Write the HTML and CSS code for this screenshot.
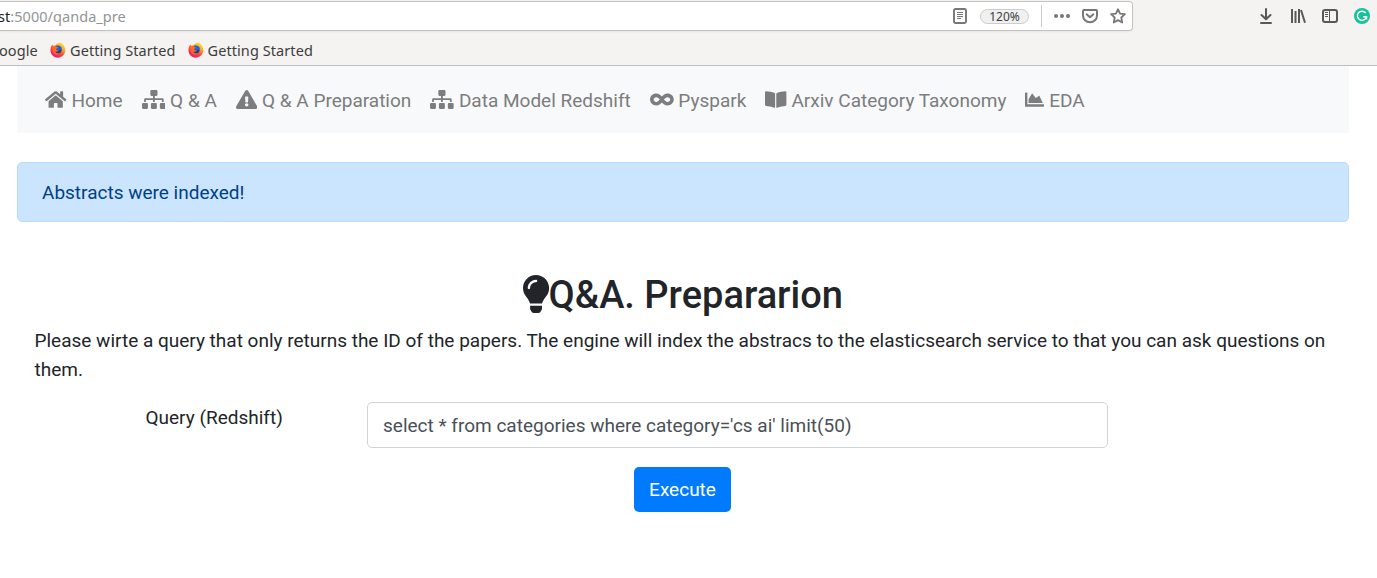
FILE: index.html
```html
<!DOCTYPE html>
<html lang="en">
<head>
<meta charset="utf-8">
<title>Q&amp;A Preparation</title>
<link rel="stylesheet" href="styles.css">
</head>
<body>
<svg width="0" height="0" class="defs">
  <symbol id="sitemap" viewBox="0 0 640 512"><path d="M128 352H32c-17.67 0-32 14.33-32 32v96c0 17.67 14.33 32 32 32h96c17.67 0 32-14.33 32-32v-96c0-17.67-14.33-32-32-32zm-24-80h192v48h48v-48h192v48h48v-57.59c0-21.17-17.23-38.41-38.41-38.41H344v-64h40c17.67 0 32-14.33 32-32V32c0-17.67-14.33-32-32-32H256c-17.67 0-32 14.33-32 32v96c0 17.67 14.33 32 32 32h40v64H94.41C73.23 224 56 241.23 56 262.41V320h48v-48zm264 80h-96c-17.67 0-32 14.33-32 32v96c0 17.67 14.33 32 32 32h96c17.67 0 32-14.33 32-32v-96c0-17.67-14.33-32-32-32zm240 0h-96c-17.67 0-32 14.33-32 32v96c0 17.67 14.33 32 32 32h96c17.67 0 32-14.33 32-32v-96c0-17.67-14.33-32-32-32z"/></symbol>
  <linearGradient id="flame" x1="0.85" y1="0" x2="0.2" y2="1"><stop offset="0" stop-color="#fff04a"/><stop offset=".35" stop-color="#ffa01e"/><stop offset=".65" stop-color="#ff3b3a"/><stop offset="1" stop-color="#f0107c"/></linearGradient>
  <symbol id="firefox" viewBox="0 0 16 16"><path fill="url(#flame)" d="M2.2 2.6 3.6 4 5.2 3.4C6.5 1.6 8 1.5 9.4.4c2 .3 3.4 1.5 4.5 3.1C16 7 15.700 10.500 13.500 13 10 16.700 5 16.300 2.300 13.200-.4 10 .2 5.500 2.200 2.600z"/><circle cx="7.800" cy="7.600" r="4.100" fill="#2463c9"/><path fill="#273a91" d="M4 8c1 1 3 1.200 4.500.2L11 7.500c.5 3-1.500 4.500-3.500 4.300C5.300 11.600 4 10 4 8z"/><path fill="#ff6a27" d="M2.500 4.500c1.500-1 3-.8 4 .3l1.500.6c-.3 1-1.700 1-2 1.800.2 1 1.600 1.300 3 .8-.8 1.800-2.700 2-4 1.500 1 2 3.500 2.400 5.500 1.300-1.500 2.500-5.500 2.500-7.200-.3-1-1.700-1.300-4-.8-6z"/></symbol>
</svg>
<header class="browser">
  <div class="toolbar">
    <div class="urlbar">
      <div class="url"><span class="host">st</span>:5000/qanda_pre</div>
      <div class="url-actions">
        <svg class="reader" width="14" height="16" viewBox="0 0 14 16" fill="none" stroke="#777"><rect x="1" y="1" width="12" height="14" rx="1.500" stroke-width="1.900"/><path d="M4 4.500h6M4 6.500h6M4 8.500h6M4 10.500h4"/></svg>
        <span class="zoom">120%</span>
        <span class="divider"></span>
        <svg class="dots" width="16" height="16" viewBox="0 0 16 16" fill="#777"><circle cx="2" cy="8" r="2"/><circle cx="8" cy="8" r="2"/><circle cx="14" cy="8" r="2"/></svg>
        <svg class="pocket" width="16" height="16" viewBox="0 0 16 16" fill="none" stroke="#777" stroke-width="2" stroke-linecap="round" stroke-linejoin="round"><path d="M2 2h12a1 1 0 0 1 1 1v4.500a7 6.800 0 0 1-14 0V3a1 1 0 0 1 1-1z"/><path d="m4.700 6.300 3.300 3 3.300-3"/></svg>
        <svg class="star" width="16" height="16" viewBox="0 0 16 16" fill="none" stroke="#777" stroke-width="1.800" stroke-linejoin="round"><path d="m8 1.200 2 4.400 4.900.6-3.600 3.300.9 5L8 12.100l-4.200 2.400.9-5L1.100 6.200 6 5.600z"/></svg>
      </div>
    </div>
    <div class="tools">
      <svg width="16" height="16" viewBox="0 0 16 16" fill="none" stroke="#58585a" stroke-width="2" stroke-linecap="round" stroke-linejoin="round"><path d="M8 1v10M3.500 7 8 11.300 12.500 7M3 15h10"/></svg>
      <svg width="16" height="16" viewBox="0 0 16 16" fill="none" stroke="#58585a" stroke-width="2"><path d="M2 1v14M5.500 3v12M9 1v14M11 2l4 12.700"/></svg>
      <svg width="16" height="16" viewBox="0 0 16 16" fill="none" stroke="#58585a"><rect x="1" y="2" width="14" height="12" rx="2" stroke-width="2"/><path d="M7.500 2v12M3 4.500h3M3 6.500h3M3 8.500h3"/></svg>
      <svg width="16" height="16" viewBox="0 0 16 16" fill="none"><circle cx="8" cy="8" r="8" fill="#15c39a"/><path d="M11.700 5A4.600 4.600 0 1 0 12.500 8.800H9.200M12.500 8.600v3" stroke="#fff" stroke-width="1.500"/></svg>
    </div>
  </div>
  <div class="bookmarks">
    <span class="cut">oogle</span>
    <span class="bookmark"><svg width="16" height="16"><use href="#firefox"/></svg>Getting Started</span>
    <span class="bookmark"><svg width="16" height="16"><use href="#firefox"/></svg>Getting Started</span>
  </div>
</header>
<main class="container">
  <nav class="navbar">
    <a class="nav-link"><svg class="icon wide" viewBox="0 0 576 512"><path d="M280.370 148.260L96 300.110V464a16 16 0 0 0 16 16l112.060-.29a16 16 0 0 0 15.920-16V368a16 16 0 0 1 16-16h64a16 16 0 0 1 16 16v95.640a16 16 0 0 0 16 16.050L464 480a16 16 0 0 0 16-16V300L295.670 148.260a12.190 12.190 0 0 0-15.300 0zM571.600 251.470L488 182.560V44.050a12 12 0 0 0-12-12h-56a12 12 0 0 0-12 12v72.610L318.470 43a48 48 0 0 0-61 0L4.340 251.470a12 12 0 0 0-1.600 16.900l25.500 31A12 12 0 0 0 45.150 301l235.220-193.740a12.190 12.190 0 0 1 15.300 0L530.900 301a12 12 0 0 0 16.900-1.600l25.500-31a12 12 0 0 0-1.700-16.930z"/></svg> Home</a>
    <a class="nav-link"><svg class="icon wider"><use href="#sitemap"/></svg> Q &amp; A</a>
    <a class="nav-link"><svg class="icon wide" viewBox="0 0 576 512"><path d="M569.517 440.013C587.975 472.007 564.806 512 527.940 512H48.054c-36.937 0-59.999-40.055-41.577-71.987L246.423 23.985c18.467-32.009 64.720-31.951 83.154 0l239.940 416.028zM288 354c-25.405 0-46 20.595-46 46s20.595 46 46 46 46-20.595 46-46-20.595-46-46-46zm-43.673-165.346l7.418 136c.347 6.364 5.609 11.346 11.982 11.346h48.546c6.373 0 11.635-4.982 11.982-11.346l7.418-136c.375-6.874-5.098-12.654-11.982-12.654h-63.383c-6.884 0-12.356 5.780-11.981 12.654z"/></svg> Q &amp; A Preparation</a>
    <a class="nav-link"><svg class="icon wider"><use href="#sitemap"/></svg> Data Model Redshift</a>
    <a class="nav-link"><svg class="icon wider" viewBox="0 0 640 512"><path d="M471.100 96C405 96 353.300 137.300 320 174.600 286.700 137.300 235 96 168.900 96 75.800 96 0 167.800 0 256s75.800 160 168.900 160c66.100 0 117.800-41.300 151.100-78.600 33.300 37.300 85 78.600 151.100 78.600 93.100 0 168.900-71.800 168.900-160S564.200 96 471.100 96zM168.900 320c-40.200 0-72.900-28.700-72.900-64s32.700-64 72.900-64c38.200 0 73.400 36.100 94 64-20.400 27.600-55.900 64-94 64zm302.200 0c-38.200 0-73.400-36.100-94-64 20.400-27.600 55.900-64 94-64 40.200 0 72.900 28.700 72.900 64s-32.700 64-72.900 64z"/></svg> Pyspark</a>
    <a class="nav-link"><svg class="icon wide" viewBox="0 0 576 512"><path d="M542.220 32.050c-54.800 3.110-163.720 14.430-230.960 55.590-4.640 2.840-7.270 7.890-7.270 13.170v363.870c0 11.550 12.630 18.850 23.280 13.490 69.180-34.820 169.230-44.320 218.700-46.920 16.890-.89 30.020-14.430 30.020-30.660V62.750c.01-17.710-15.350-31.740-33.770-30.700zM264.730 87.640C197.500 46.480 88.580 35.170 33.780 32.050 15.360 31.010 0 45.040 0 62.750V400.600c0 16.240 13.130 29.780 30.020 30.660 49.490 2.600 149.590 12.110 218.770 46.950 10.620 5.350 23.210-1.940 23.210-13.460V100.630c0-5.290-2.620-10.140-7.270-12.990z"/></svg> Arxiv Category Taxonomy</a>
    <a class="nav-link"><svg class="icon" viewBox="0 0 512 512"><path d="M500 384c6.600 0 12 5.400 12 12v40c0 6.600-5.400 12-12 12H12c-6.600 0-12-5.400-12-12V76c0-6.600 5.400-12 12-12h40c6.600 0 12 5.400 12 12v308h436zM372.700 159.500L288 216l-85.300-113.700c-5.100-6.800-15.500-6.300-19.900 1L96 248v104h384l-89.900-187.800c-3.200-6.500-11.400-8.700-17.400-4.700z"/></svg> EDA</a>
  </nav>
  <div class="alert">Abstracts were indexed!</div>
  <section class="content">
    <h2 class="title"><svg class="bulb" viewBox="0 0 352 512"><path d="M96.060 454.350c.01 6.290 1.870 12.450 5.360 17.690l17.090 25.690a31.990 31.990 0 0 0 26.640 14.280h61.710a31.990 31.990 0 0 0 26.640-14.280l17.090-25.690a31.989 31.989 0 0 0 5.360-17.690l.04-38.350H96.010l.05 38.350zM0 176c0 44.370 16.450 84.850 43.560 115.780 16.520 18.850 42.360 58.230 52.210 91.450.04.26.07.52.11.78h160.240c.04-.26.07-.51.11-.78 9.850-33.220 35.690-72.600 52.210-91.450C335.550 260.850 352 220.370 352 176 352 78.610 272.910-.3 175.450 0 73.440.31 0 82.970 0 176zm176-80c-44.110 0-80 35.890-80 80 0 8.840-7.160 16-16 16s-16-7.160-16-16c0-61.760 50.240-112 112-112 8.840 0 16 7.160 16 16s-7.160 16-16 16z"/></svg>Q&amp;A. Prepararion</h2>
    <p class="intro">Please wirte a query that only returns the ID of the papers. The engine will index the abstracs to the elasticsearch service to that you can ask questions on them.</p>
    <form class="query-form">
      <label class="label" for="query">Query (Redshift)</label>
      <input class="input" id="query" type="text" value="select * from categories where category='cs ai' limit(50)">
    </form>
    <button class="button" type="button">Execute</button>
  </section>
</main>
</body>
</html>
```
FILE: styles.css
```css
* { box-sizing: border-box; }
body { margin: 0; height: 578px; overflow: hidden; background: #fff; color: #212529; font: 19px/28.8px Roboto, sans-serif; }
.defs { position: absolute; }
.browser { height: 66px; background: #f4f3f1; border-bottom: 1px solid #c1bfbd; font-family: "Noto Sans", sans-serif; color: #3d3d3d; }
.toolbar { display: flex; justify-content: space-between; height: 32px; padding-top: 1px; }
.urlbar { display: flex; justify-content: space-between; align-items: center; width: 1133px; height: 30px; background: #fff; border: 1px solid #c6c2be; border-left: 0; border-radius: 0 4px 4px 0; box-shadow: 0 1px 2px #0000000d; }
.url { margin-left: -2px; font-size: 14.500px; line-height: 20px; letter-spacing: 0.050px; color: #949494; }
.host { color: #222; }
.url-actions { display: flex; align-items: center; padding-right: 6px; }
.zoom { width: 49px; height: 15px; margin-left: 13px; border: 1px solid #ccc; border-radius: 8px; background: #f0f0f0; font-size: 12px; line-height: 13px; text-align: center; }
.divider { width: 1px; height: 22px; margin: 0 12px; background: #cacaca; }
.pocket, .star { margin-left: 12px; }
.tools { display: flex; align-items: center; gap: 16px; padding-right: 7px; height: 30px; }
.bookmarks { display: flex; align-items: center; height: 33px; padding-top: 4px; font-size: 14.500px; line-height: 18px; letter-spacing: 0.080px; }
.cut { width: 50px; padding-bottom: 2px; text-indent: -1px; }
.bookmark { display: flex; align-items: center; gap: 4px; width: 137.500px; padding-bottom: 1px; white-space: nowrap; }
.container { width: 1332px; margin-left: 17px; }
.navbar { display: flex; height: 67px; padding: 21px 18.800px 0; background: #f8f9fa; color: #7c7d7e; }
.nav-link { padding: 0 9.570px 0 9.500px; white-space: nowrap; }
.icon { width: 19px; height: 19px; vertical-align: -2.400px; fill: currentColor; }
.wide { width: 21.400px; }
.wider { width: 23.800px; }
.alert { height: 60px; margin-top: 29px; padding: 16px 24px; border: 1px solid #b8daff; border-radius: 5px; background: #cce5ff; color: #004085; }
.content { padding: 0 18px 0 17.500px; margin-top: 50px; text-align: center; }
.title { margin: 0 0 9px; font-size: 38px; line-height: 46px; font-weight: 500; }
.bulb { width: 26.100px; height: 38px; vertical-align: -5.400px; fill: currentColor; }
.intro { margin: 0 0 17px; text-align: left; }
.query-form { display: grid; grid-template-columns: 332.500px 741px; text-align: left; }
.label { padding: 2px 0 0 111px; }
.input { height: 46px; padding: 2px 15px 0; border: 1px solid #ced4da; border-radius: 5px; color: #495057; background: #fff; font: inherit; }
.button { display: block; width: 97px; height: 45px; margin: 19px 0 0 599.500px; padding: 3.500px 0 0; border: 0; border-radius: 5px; background: #007bff; color: #fff; font: inherit; }
```
